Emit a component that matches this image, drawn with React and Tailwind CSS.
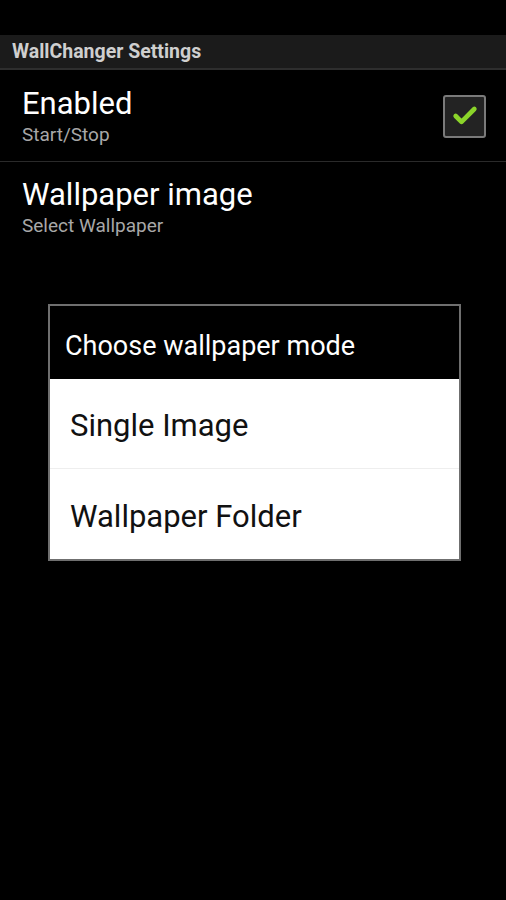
import { Check } from "lucide-react";

const font = { fontFamily: "Roboto, 'Noto Sans', sans-serif" };

function PrefRow({ title, summary, children, divider }) {
  return (
    <div className={`flex h-[91px] items-center pl-[22px] pr-[20px] ${divider ? "border-b border-[#2a2a2a]" : ""}`}>
      <div className="flex-1">
        <p className="text-[31px] leading-[34px] text-white">{title}</p>
        <p className="mt-[3px] text-[19px] leading-[22px] text-[#a8a8a8]">{summary}</p>
      </div>
      {children}
    </div>
  );
}

export default function App() {
  return (
    <div className="h-[900px] w-[506px] bg-black" style={font}>
      {/* status bar */}
      <div className="h-[35px] bg-black" />

      {/* title bar */}
      <div className="flex h-[35px] items-center border-b-2 border-[#2e2e2e] bg-[#1b1b1b] px-[12px]">
        <span className="text-[19.5px] font-bold text-[#cfcfcf]">WallChanger Settings</span>
      </div>

      <div className="pt-[1px]">
        <PrefRow title="Enabled" summary="Start/Stop" divider>
          <div className="flex h-[43px] w-[43px] items-center justify-center rounded-[3px] border-2 border-[#7a7a7a] bg-[#232323]">
            <Check className="h-[28px] w-[28px] text-[#8bd42a]" strokeWidth={4} />
          </div>
        </PrefRow>
        <PrefRow title="Wallpaper image" summary="Select Wallpaper" />
      </div>

      {/* dialog */}
      <div className="mx-[48px] mt-[51px] w-[413px] border-2 border-[#6f6f6f]">
        <div className="flex h-[73px] items-center bg-black pl-[15px] pt-[8px]">
          <span className="text-[27px] text-white">Choose wallpaper mode</span>
        </div>
        <div className="bg-white">
          <div className="flex h-[90px] items-center border-b border-[#eeeeee] pl-[20px] pt-[6px]">
            <span className="text-[31px] text-[#111]">Single Image</span>
          </div>
          <div className="flex h-[90px] items-center pl-[20px] pt-[6px]">
            <span className="text-[31px] text-[#111]">Wallpaper Folder</span>
          </div>
        </div>
      </div>
    </div>
  );
}
